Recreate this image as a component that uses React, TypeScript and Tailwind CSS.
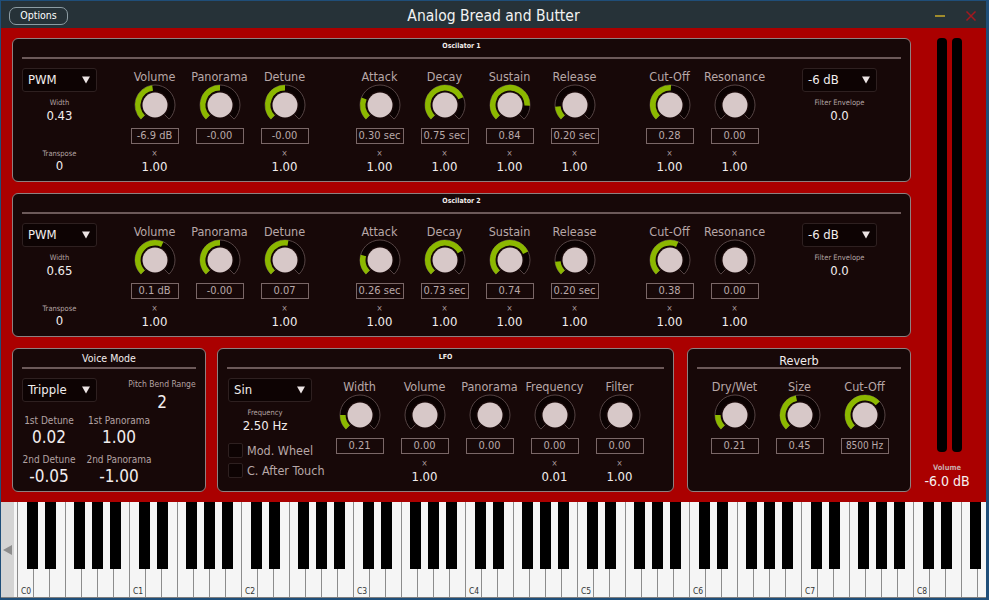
import React from 'react';

// knob geometry helpers (angles in degrees, 0 = top, clockwise)
const pt = (r: number, a: number) => {
  const t = (a * Math.PI) / 180;
  return `${(22 + r * Math.sin(t)).toFixed(2)} ${(22 - r * Math.cos(t)).toFixed(2)}`;
};
const arc = (r: number, a0: number, a1: number) =>
  `M${pt(r, a0)} A${r} ${r} 0 ${a1 - a0 > 180 ? 1 : 0} 1 ${pt(r, a1)}`;

function Knob({ angle }: { angle: number | null }) {
  return (
    <svg width="44" height="44" viewBox="0 0 44 44">
      <path d={arc(17, -135, 135)} stroke="#0b0202" strokeWidth="6" fill="none" />
      <path
        d={`M${pt(13.5, -135)} L${pt(20, -135)} A20 20 0 1 1 ${pt(20, 135)} L${pt(13.5, 135)}`}
        stroke="#544343"
        strokeWidth="1"
        fill="none"
      />
      {angle !== null && <path d={arc(17.2, -135, angle)} stroke="#8cb800" strokeWidth="5.6" fill="none" />}
      <circle cx="22" cy="22" r="12.5" fill="#d7c8c8" />
    </svg>
  );
}

interface KnobColProps {
  label: string;
  box: string;
  angle: number | null;
  mult?: string;
  small?: boolean;
}

function KnobCol({ label, box, angle, mult, small }: KnobColProps) {
  return (
    <div className="flex w-[65px] flex-col items-center">
      <div className="h-[13px] whitespace-nowrap text-[12.5px] leading-[13px] text-[#b7a7a7]">{label}</div>
      <Knob angle={angle} />
      <div
        className={`mt-[1px] flex h-[16px] w-[48px] items-center justify-center border border-[#7a6767] leading-[14px] text-[#b9a9a9] ${
          small ? 'text-[10px]' : 'text-[11px]'
        }`}
      >
        {box}
      </div>
      {mult && (
        <>
          <div className="mt-[5px] h-[10px] text-[8px] leading-[10px] text-[#b0a0a0]">×</div>
          <div className="mt-[1px] h-[14px] text-[13px] leading-[14px] text-[#f2eded]">{mult}</div>
        </>
      )}
    </div>
  );
}

function Dropdown({ text, w = 'w-[75px]' }: { text: string; w?: string }) {
  return (
    <div
      className={`flex h-[24px] ${w} shrink-0 items-center justify-between rounded-[3px] border border-[#2e2020] bg-[#0d0303] pl-[5px] pr-[6px]`}
    >
      <span className="text-[13px] leading-[16px] text-[#f2eded]">{text}</span>
      <svg width="8" height="8" viewBox="0 0 8 8">
        <path d="M0 0.5 H8 L4 7.5 Z" fill="#ece4e4" />
      </svg>
    </div>
  );
}

function Small({ children, className = '' }: { children: React.ReactNode; className?: string }) {
  return (
    <div className={`h-[10px] whitespace-nowrap text-[7.5px] leading-[10px] text-[#b3a3a3] ${className}`}>
      {children}
    </div>
  );
}

function Val({ children, className = '' }: { children: React.ReactNode; className?: string }) {
  return <div className={`h-[14px] text-[13px] leading-[14px] text-[#f2eded] ${className}`}>{children}</div>;
}

function Panel({
  title,
  titleCls,
  className,
  children,
}: {
  title: string;
  titleCls: string;
  className: string;
  children: React.ReactNode;
}) {
  return (
    <div className={`flex flex-col rounded-[6px] border border-[#8e8080] bg-[#170808] ${className}`}>
      <div className={`h-[18px] text-center text-[#f2eded] ${titleCls}`}>{title}</div>
      <div className="mx-[9px] h-[2px] bg-[#6c5959]" />
      {children}
    </div>
  );
}

interface OscProps {
  title: string;
  width: string;
  angles: (number | null)[];
  boxes: string[];
}

function Oscillator({ title, width, angles, boxes }: OscProps) {
  const k = (i: number, label: string, mult?: string) => (
    <KnobCol label={label} box={boxes[i]} angle={angles[i]} mult={mult} />
  );
  return (
    <Panel title={title} titleCls="pt-[2px] text-[7px] font-bold leading-[10px]" className="h-[144px] w-[899px]">
      <div className="flex items-start">
        <div className="ml-[9px] flex w-[75px] flex-col items-center pt-[9px]">
          <Dropdown text="PWM" />
          <Small className="mt-[6px]">Width</Small>
          <Val className="mt-[1px]">{width}</Val>
          <Small className="mt-[26px]">Transpose</Small>
          <Val>0</Val>
        </div>
        <div className="ml-[25px] flex pt-[11px]">
          {k(0, 'Volume', '1.00')}
          {k(1, 'Panorama')}
          {k(2, 'Detune', '1.00')}
        </div>
        <div className="ml-[30px] flex pt-[11px]">
          {k(3, 'Attack', '1.00')}
          {k(4, 'Decay', '1.00')}
          {k(5, 'Sustain', '1.00')}
          {k(6, 'Release', '1.00')}
        </div>
        <div className="ml-[30px] flex pt-[11px]">
          {k(7, 'Cut-Off', '1.00')}
          {k(8, 'Resonance', '1.00')}
        </div>
        <div className="ml-[35px] flex w-[75px] flex-col items-center pt-[9px]">
          <Dropdown text="-6 dB" />
          <Small className="mt-[6px]">Filter Envelope</Small>
          <Val className="mt-[1px]">0.0</Val>
        </div>
      </div>
    </Panel>
  );
}

function Check({ label, className }: { label: string; className: string }) {
  return (
    <div className={`flex h-[15px] items-center whitespace-nowrap ${className}`}>
      <div className="h-[15px] w-[15px] shrink-0 rounded-[2px] border border-[#2e2020] bg-[#0d0303]" />
      <span className="ml-[4px] text-[12.5px] leading-[15px] text-[#b7a7a7]">{label}</span>
    </div>
  );
}

function VoiceCell({ label, value }: { label: string; value: string }) {
  return (
    <div className="flex flex-col items-center">
      <div className="h-[12px] whitespace-nowrap text-[10px] leading-[12px] text-[#b3a3a3]">{label}</div>
      <div className="h-[20px] text-[17px] leading-[20px] text-[#f2eded]">{value}</div>
    </div>
  );
}

const BLACK = ['left-[10px]', 'left-[28px]', 'left-[57px]', 'left-[75px]', 'left-[93px]'];

function Octave({ n }: { n: number }) {
  return (
    <div className="relative flex h-full w-[112px] shrink-0">
      {Array.from({ length: 7 }).map((_, i) => (
        <div key={i} className="flex h-full w-[16px] shrink-0 items-end border-l border-[#8c8c8c] pb-[1px] pl-[3px]">
          {i === 0 && n >= 0 && <span className="text-[8.5px] leading-[10px] text-[#333333]">C{n}</span>}
        </div>
      ))}
      {BLACK.map((l) => (
        <div key={l} className={`absolute top-0 h-[67px] w-[11px] bg-black ${l}`} />
      ))}
    </div>
  );
}

export default function App() {
  return (
    <div className="flex h-[600px] w-[989px] flex-col overflow-hidden border-b-2 border-l border-r-[3px] border-t border-[#1f4e79] bg-[#1f4e79] font-['DejaVu_Sans_Condensed','DejaVu_Sans',sans-serif]">
      {/* title bar */}
      <div className="grid h-[27px] shrink-0 grid-cols-[1fr_auto_1fr] items-center bg-[#263238] pt-[2px]">
        <div className="pl-[8px]">
          <div className="flex h-[18px] w-[59px] items-center justify-center rounded-[7px] border border-[#8d9ca3] text-[10.5px] text-white">
            Options
          </div>
        </div>
        <div className="pt-[1px] text-[15.5px] leading-[18px] text-[#f2f2f2]">Analog Bread and Butter</div>
        <div className="flex items-center justify-end pr-[10px]">
          <div className="h-[2px] w-[10px] bg-[#a08c2c]" />
          <svg className="ml-[21px]" width="10" height="10" viewBox="0 0 10 10">
            <path d="M0.5 0.5 L9.5 9.5 M9.5 0.5 L0.5 9.5" stroke="#a3181f" strokeWidth="1.5" />
          </svg>
        </div>
      </div>

      {/* main red area */}
      <div className="flex h-[474px] shrink-0 bg-[#aa0000] pl-[11px] pt-[10px]">
        <div className="flex w-[899px] flex-col gap-[11px]">
          <Oscillator
            title="Oscilator 1"
            width="0.43"
            angles={[-8, 0, 0, -68, 67, 92, -95, 3, null]}
            boxes={['-6.9 dB', '-0.00', '-0.00', '0.30 sec', '0.75 sec', '0.84', '0.20 sec', '0.28', '0.00']}
          />
          <Oscillator
            title="Oscilator 2"
            width="0.65"
            angles={[25, 0, 10, -75, 62, 65, -95, 25, null]}
            boxes={['0.1 dB', '-0.00', '0.07', '0.26 sec', '0.73 sec', '0.74', '0.20 sec', '0.38', '0.00']}
          />
          <div className="flex h-[144px]">
            <Panel title="Voice Mode" titleCls="pt-[3px] text-[10.5px] leading-[12px]" className="h-[144px] w-[194px]">
              <div className="flex items-start pt-[9px]">
                <div className="ml-[9px]">
                  <Dropdown text="Tripple" />
                </div>
                <div className="ml-[25px] flex w-[80px] flex-col items-center pt-[1px]">
                  <div className="h-[11px] whitespace-nowrap text-[8.5px] leading-[11px] text-[#b3a3a3]">Pitch Bend Range</div>
                  <div className="mt-[2px] h-[20px] text-[17px] leading-[20px] text-[#f2eded]">2</div>
                </div>
              </div>
              <div className="ml-[1px] mt-[3px] grid w-[140px] grid-cols-2 gap-y-[7px]">
                <VoiceCell label="1st Detune" value="0.02" />
                <VoiceCell label="1st Panorama" value="1.00" />
                <VoiceCell label="2nd Detune" value="-0.05" />
                <VoiceCell label="2nd Panorama" value="-1.00" />
              </div>
            </Panel>

            <Panel title="LFO" titleCls="pt-[3px] text-[7px] font-bold leading-[10px]" className="ml-[11px] h-[144px] w-[457px]">
              <div className="flex items-start">
                <div className="ml-[10px] flex w-[84px] flex-col pt-[9px]">
                  <Dropdown text="Sin" w="w-[84px]" />
                  <div className="flex w-[74px] flex-col items-center">
                    <Small className="mt-[6px]">Frequency</Small>
                    <Val className="mt-[1px]">2.50 Hz</Val>
                  </div>
                  <Check className="mt-[10px]" label="Mod. Wheel" />
                  <Check className="mt-[5px]" label="C. After Touch" />
                </div>
                <div className="ml-[15px] flex pt-[11px]">
                  <KnobCol label="Width" box="0.21" angle={-90} />
                  <KnobCol label="Volume" box="0.00" angle={null} mult="1.00" />
                  <KnobCol label="Panorama" box="0.00" angle={null} />
                  <KnobCol label="Frequency" box="0.00" angle={null} mult="0.01" />
                  <KnobCol label="Filter" box="0.00" angle={null} mult="1.00" />
                </div>
              </div>
            </Panel>

            <Panel title="Reverb" titleCls="pt-[4px] text-[12.5px] leading-[15px]" className="ml-[13px] h-[144px] w-[224px]">
              <div className="flex pl-[14px] pt-[11px]">
                <KnobCol label="Dry/Wet" box="0.21" angle={-90} />
                <KnobCol label="Size" box="0.45" angle={-12} />
                <KnobCol label="Cut-Off" box="8500 Hz" angle={48} small />
              </div>
            </Panel>
          </div>
        </div>

        {/* output meter */}
        <div className="ml-[6px] flex w-[60px] flex-col">
          <div className="ml-[20px] flex gap-[5px]">
            <div className="h-[414px] w-[10px] rounded-[4px] bg-black" />
            <div className="h-[414px] w-[10px] rounded-[4px] bg-black" />
          </div>
          <div className="mt-[11px] h-[10px] text-center text-[7.5px] font-bold leading-[10px] text-[#c9a9a9]">Volume</div>
          <div className="h-[17px] text-center text-[14px] leading-[17px] text-[#f7f0f0]">-6.0 dB</div>
        </div>
      </div>

      {/* keyboard */}
      <div className="flex h-[96px] shrink-0 border-b border-[#7f7f7f]">
        <div className="flex w-[13px] shrink-0 items-center justify-center bg-[#d4d4d4]">
          <svg width="9" height="10" viewBox="0 0 9 10">
            <path d="M0 5 L9 0 V10 Z" fill="#8d8d8d" />
          </svg>
        </div>
        <div className="relative flex-1 overflow-hidden bg-[#f5f5f5]">
          <div className="ml-[-109px] flex h-full">
            {[-1, 0, 1, 2, 3, 4, 5, 6, 7, 8].map((o) => (
              <Octave key={o} n={o} />
            ))}
          </div>
        </div>
      </div>
    </div>
  );
}
